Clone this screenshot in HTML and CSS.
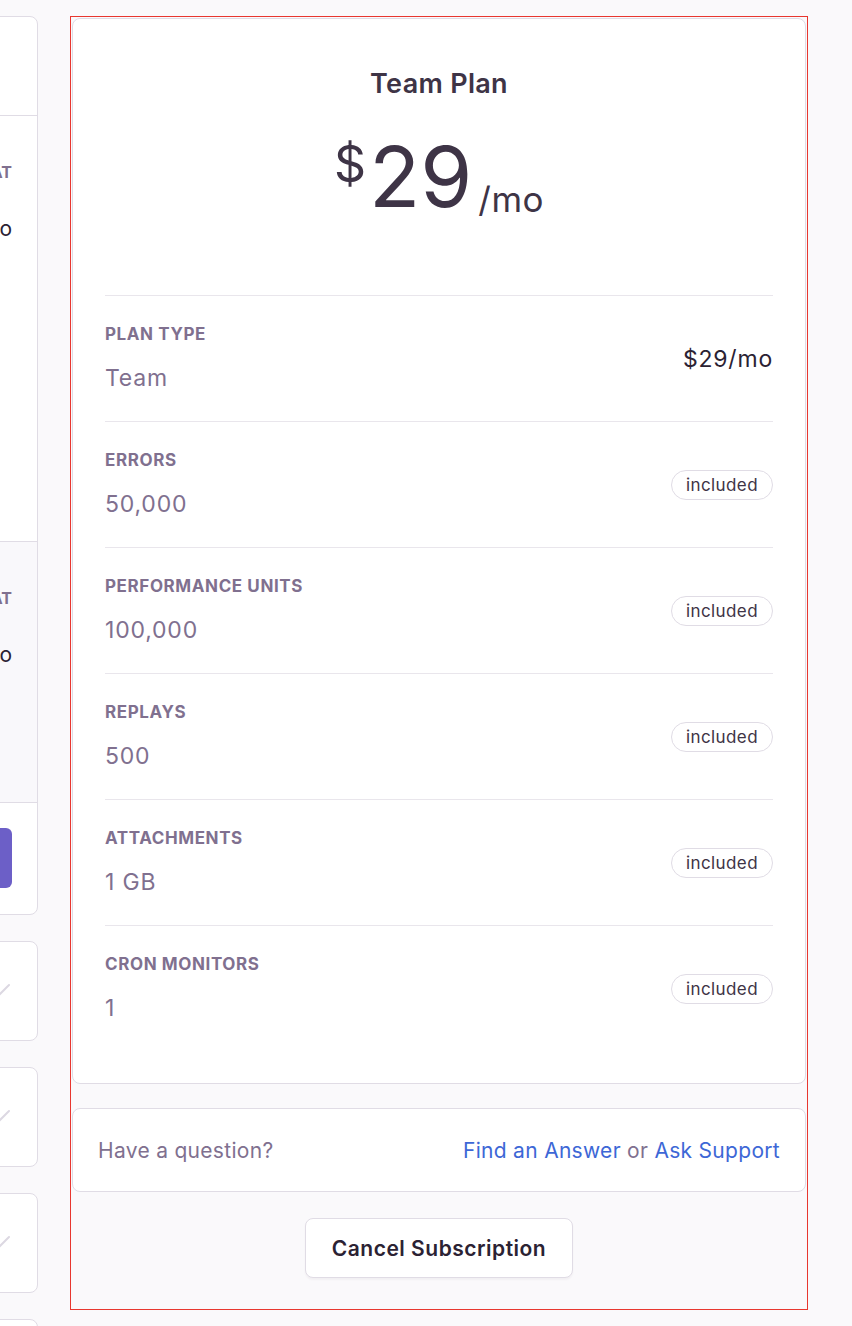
FILE: index.html
```html
<!DOCTYPE html>
<html lang="en">
<head>
<meta charset="utf-8">
<title>Subscription</title>
<link rel="stylesheet" href="styles.css">
</head>
<body>
<div class="page">
  <aside class="side">
    <div class="plan-card">
      <div class="pc-top"></div>
      <div class="pc-section">
        <div class="pc-row"><span class="pc-label">BILLED AT</span></div>
        <div class="pc-row"><span class="pc-value">$26/mo</span></div>
      </div>
      <div class="pc-section pc-alt">
        <div class="pc-row"><span class="pc-label">BILLED AT</span></div>
        <div class="pc-row"><span class="pc-value">$29/mo</span></div>
      </div>
      <div class="pc-footer"><span class="pc-btn"></span></div>
    </div>
    <div class="mini-card"><svg class="mini-check" width="22" height="22" viewBox="0 0 22 22"><path d="M3 12l5 5L20 5" fill="none" stroke="#dcd8e2" stroke-width="2" stroke-linecap="round" stroke-linejoin="round"/></svg></div>
    <div class="mini-card"><svg class="mini-check" width="22" height="22" viewBox="0 0 22 22"><path d="M3 12l5 5L20 5" fill="none" stroke="#dcd8e2" stroke-width="2" stroke-linecap="round" stroke-linejoin="round"/></svg></div>
    <div class="mini-card"><svg class="mini-check" width="22" height="22" viewBox="0 0 22 22"><path d="M3 12l5 5L20 5" fill="none" stroke="#dcd8e2" stroke-width="2" stroke-linecap="round" stroke-linejoin="round"/></svg></div>
    <div class="mini-card mini-last"></div>
  </aside>

  <main class="main">
    <section class="summary">
      <header class="summary-head">
        <h2 class="plan-name">Team Plan</h2>
        <div class="price">
          <span class="price-cur">$</span><span class="price-num">29</span><span class="price-per">/mo</span>
        </div>
      </header>
      <div class="rows">
        <div class="row">
          <div class="row-info">
            <div class="row-label">PLAN TYPE</div>
            <div class="row-value">Team</div>
          </div>
          <div class="row-price">$29/mo</div>
        </div>
        <div class="row">
          <div class="row-info">
            <div class="row-label">ERRORS</div>
            <div class="row-value">50,000</div>
          </div>
          <span class="tag">included</span>
        </div>
        <div class="row">
          <div class="row-info">
            <div class="row-label">PERFORMANCE UNITS</div>
            <div class="row-value">100,000</div>
          </div>
          <span class="tag">included</span>
        </div>
        <div class="row">
          <div class="row-info">
            <div class="row-label">REPLAYS</div>
            <div class="row-value">500</div>
          </div>
          <span class="tag">included</span>
        </div>
        <div class="row">
          <div class="row-info">
            <div class="row-label">ATTACHMENTS</div>
            <div class="row-value">1 GB</div>
          </div>
          <span class="tag">included</span>
        </div>
        <div class="row">
          <div class="row-info">
            <div class="row-label">CRON MONITORS</div>
            <div class="row-value">1</div>
          </div>
          <span class="tag">included</span>
        </div>
      </div>
    </section>

    <section class="help">
      <span class="help-q">Have a question?</span>
      <span class="help-links"><a href="#" class="link">Find an Answer</a> or <a href="#" class="link">Ask Support</a></span>
    </section>

    <div class="actions">
      <button class="cancel-btn" type="button">Cancel Subscription</button>
    </div>
  </main>
</div>
</body>
</html>
```

FILE: styles.css
```css
* { box-sizing: border-box; }

html, body {
  margin: 0;
  padding: 0;
  background: #faf9fb;
  overflow: hidden;
}

body {
  font-family: Inter, "Noto Sans", sans-serif;
  color: #2b2233;
  width: 852px;
  height: 1326px;
}

.page {
  display: flex;
  align-items: flex-start;
  gap: 32px;
  padding-top: 16px;
  height: 1326px;
  overflow: hidden;
}

/* ---------- left (cut-off) column ---------- */
.side {
  flex: 0 0 300px;
  margin-left: -262px;
  display: flex;
  flex-direction: column;
  gap: 26px;
}

.plan-card {
  background: #fff;
  border: 1px solid #e0dce5;
  border-radius: 8px;
  overflow: hidden;
}

.pc-top {
  height: 99px;
  border-bottom: 1px solid #e0dce5;
}

.pc-section {
  height: 426px;
  border-bottom: 1px solid #e0dce5;
  padding: 46px 25px 0 0;
  display: flex;
  flex-direction: column;
  align-items: flex-end;
  gap: 34px;
}

.pc-alt {
  height: 261px;
  background: #f9f8fb;
}

.pc-label {
  font-size: 16px;
  font-weight: 700;
  color: #80708f;
}

.pc-value {
  font-size: 21px;
  color: #2b2233;
}

.pc-footer {
  height: 111px;
  display: flex;
  justify-content: flex-end;
  padding: 25px 25px 0 0;
}

.pc-btn {
  width: 140px;
  height: 60px;
  background: #6c5fc7;
  border-radius: 6px;
}

.mini-card {
  height: 100px;
  background: #fff;
  border: 1px solid #e0dce5;
  border-radius: 8px;
  display: flex;
  align-items: center;
  justify-content: flex-end;
  padding-right: 26px;
}

.mini-last {
  height: 40px;
}

/* ---------- main column ---------- */
.main {
  flex: 0 0 738px;
  border: 1px solid #e8372f;
  padding: 1px;
  display: flex;
  flex-direction: column;
  padding-bottom: 31px;
}

.summary {
  background: #fff;
  border: 1px solid #e0dce5;
  border-radius: 8px;
  padding: 0 32px 32px;
}

.summary-head {
  text-align: center;
  padding: 48px 0 76px;
  border-bottom: 1px solid #e9e6ec;
}

.plan-name {
  margin: 0;
  font-size: 27px;
  line-height: 34px;
  font-weight: 600;
  letter-spacing: 0.3px;
  color: #3e3446;
}

.price {
  margin-top: 34px;
  display: flex;
  justify-content: center;
  align-items: flex-start;
  color: #3e3446;
  line-height: 1;
}

.price-cur {
  font-size: 50px;
  margin-top: 4px;
  margin-right: 3px;
}

.price-num {
  font-size: 84px;
  letter-spacing: 0;
  margin: 0 6px 0 0;
}

.price-per {
  font-size: 35px;
  align-self: flex-end;
  margin-bottom: 2px;
  letter-spacing: 0.5px;
}

.row {
  display: flex;
  align-items: center;
  justify-content: space-between;
  padding: 28px 0;
  border-bottom: 1px solid #e9e6ec;
}

.row:last-child {
  border-bottom: 0;
}

.row-label {
  font-size: 17px;
  line-height: 20px;
  font-weight: 700;
  letter-spacing: 0.6px;
  color: #80708f;
}

.row-value {
  margin-top: 19px;
  font-size: 23px;
  line-height: 30px;
  letter-spacing: 0.8px;
  color: #80708f;
}

.row-price {
  font-size: 23px;
  letter-spacing: 0.8px;
  color: #2b2233;
}

.tag {
  display: inline-flex;
  align-items: center;
  height: 30px;
  padding: 0 14px;
  border: 1px solid #e0dce5;
  border-radius: 15px;
  font-size: 17px;
  letter-spacing: 0.4px;
  color: #3e3446;
}

.help {
  margin-top: 24px;
  background: #fff;
  border: 1px solid #e0dce5;
  border-radius: 8px;
  height: 84px;
  padding: 0 25px;
  display: flex;
  align-items: center;
  justify-content: space-between;
  font-size: 21px;
  letter-spacing: 0.3px;
  color: #80708f;
}

.link {
  color: #3d67d6;
  text-decoration: none;
}

.actions {
  margin-top: 26px;
  display: flex;
  justify-content: center;
}

.cancel-btn {
  width: 268px;
  height: 60px;
  background: #fff;
  border: 1px solid #e0dce5;
  border-radius: 8px;
  box-shadow: 0 2px 2px rgba(43, 34, 51, 0.04);
  font-family: inherit;
  font-size: 21px;
  font-weight: 600;
  letter-spacing: 0.5px;
  color: #2b2233;
  cursor: pointer;
}
```
